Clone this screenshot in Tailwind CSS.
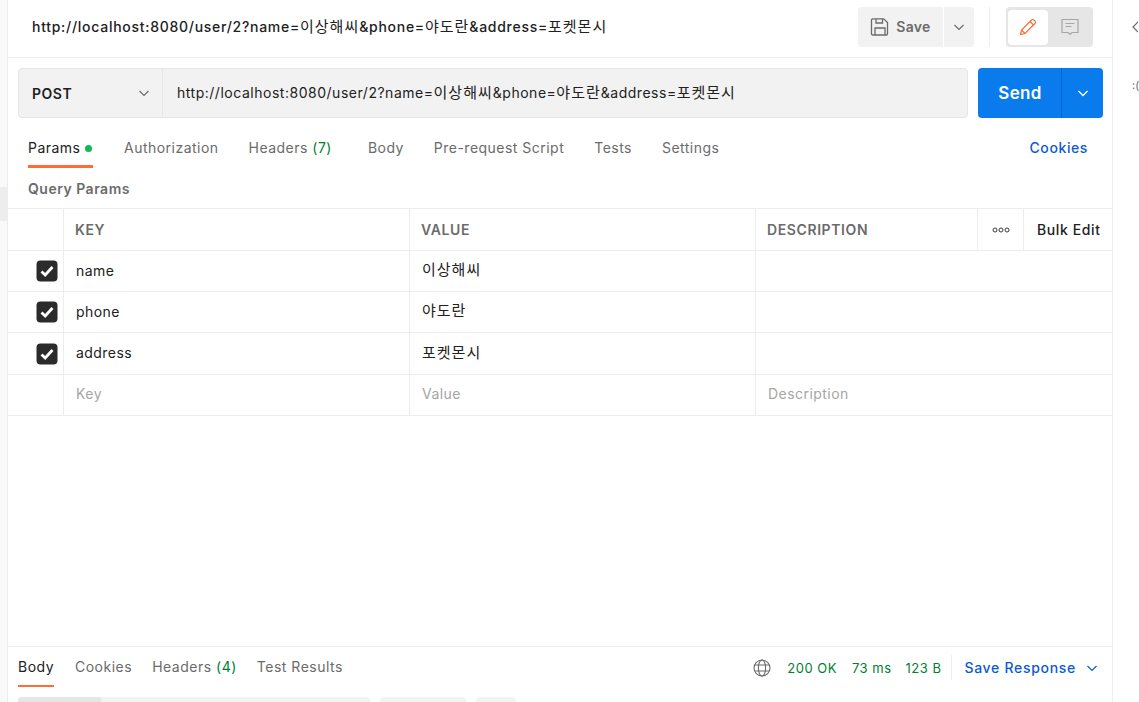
<!DOCTYPE html>
<html lang="en">
<head>
<meta charset="UTF-8">
<title>Postman request</title>
<script src="https://cdn.jsdelivr.net/npm/@tailwindcss/browser@4"></script>
</head>
<body class="bg-white overflow-hidden font-['Inter','Noto_Sans_CJK_KR',sans-serif]">
<div class="flex w-[1139px] h-[702px] overflow-hidden">

  <!-- left strip -->
  <div class="w-[8px] h-full shrink-0 bg-[#f9f9f9] border-r border-[#ededed] pt-[187px]">
    <div class="h-[34px] bg-[#ededed]"></div>
  </div>

  <!-- main -->
  <div class="w-[1104px] h-full shrink-0 flex flex-col">

    <!-- title bar -->
    <div class="h-[58px] shrink-0 border-b border-[#ededed] flex items-center pl-[24px] pr-[19px] pb-[3px]">
      <div class="text-[14px] font-medium text-[#212121] tracking-[0.72px] whitespace-nowrap mt-[1px]">http://localhost:8080/user/2?name=<span class="text-[15px] font-normal tracking-[1px]">이상해씨</span>&amp;phone=<span class="text-[15px] font-normal tracking-[1px]">야도란</span>&amp;address=<span class="text-[15px] font-normal tracking-[1px]">포켓몬시</span></div>
      <div class="ml-auto flex items-center">
        <button class="w-[85px] h-[40px] pb-[1px] bg-[#f2f2f2] rounded-l-[4px] flex items-center justify-center gap-[6px] text-[14px] tracking-[0.3px] font-semibold text-[#6b6b6b]">
          <svg width="20" height="20" viewBox="0 0 20 20" fill="none" stroke="#6b6b6b" stroke-width="1.3"><path d="M1.500 3a1.200 1.200 0 0 1 1.200-1.200h11l3.800 3.800v11.200a1.200 1.200 0 0 1-1.200 1.200H2.700a1.200 1.200 0 0 1-1.200-1.200z"/><path d="M6 2v4h6.500V2M5 18v-7h10v7"/></svg>
          Save
        </button>
        <button class="w-[30px] h-[40px] ml-[1px] bg-[#f2f2f2] rounded-r-[4px] flex items-center justify-center">
          <svg width="12" height="12" viewBox="0 0 12 12" fill="none" stroke="#6b6b6b" stroke-width="1.2"><path d="M1.500 4l4.500 4.500L10.500 4"/></svg>
        </button>
        <div class="w-px h-[40px] bg-[#ededed] ml-[15px] mr-[16px]"></div>
        <div class="w-[87px] h-[40px] bg-[#e6e6e6] rounded-[4px] flex items-center pl-[2px]">
          <div class="w-[40px] h-[35px] bg-white rounded-[4px] flex items-center justify-center">
            <svg width="20" height="20" viewBox="0 0 20 20" fill="none" stroke="#ff6c37" stroke-width="1.2"><path d="M2.500 17.500l1-4.500L13.500 3a1.600 1.600 0 0 1 2.300 0l1.200 1.200a1.600 1.600 0 0 1 0 2.300L7 16.500z"/><path d="M12 4.500l3.500 3.500M3.500 13L7 16.500"/></svg>
          </div>
          <div class="w-[43px] flex items-center justify-center">
            <svg width="20" height="20" viewBox="0 0 20 20" fill="none" stroke="#a6a6a6" stroke-width="1.2"><path d="M2 2.500h16v13h-6l-2 2-2-2H2z"/><path d="M5.500 6.500h9M5.500 9.500h6"/></svg>
          </div>
        </div>
      </div>
    </div>

    <!-- url row -->
    <div class="h-[50px] shrink-0 mt-[10px] ml-[10px] mr-[9px] flex">
      <div class="w-[950px] shrink-0 h-full bg-[#f2f2f2] border border-[#e6e6e6] rounded-[4px] flex items-center">
        <div class="w-[144px] h-full shrink-0 border-r border-[#e6e6e6] flex items-center justify-between pl-[13px] pr-[12px]">
          <span class="text-[14px] font-semibold tracking-[0.5px] text-[#212121]">POST</span>
          <svg width="12" height="12" viewBox="0 0 12 12" fill="none" stroke="#6b6b6b" stroke-width="1.2"><path d="M1.500 4l4.500 4.500L10.500 4"/></svg>
        </div>
        <div class="pl-[14px] text-[14px] text-[#212121] tracking-[0.52px] whitespace-nowrap">http://localhost:8080/user/2?name=<span class="text-[15px] tracking-[1px]">이상해씨</span>&amp;phone=<span class="text-[15px] tracking-[1px]">야도란</span>&amp;address=<span class="text-[15px] tracking-[1px]">포켓몬시</span></div>
      </div>
      <div class="w-[125px] shrink-0 h-full ml-[10px] bg-[#097bed] rounded-[4px] flex">
        <div class="w-[84px] h-full pt-[1px] pl-[1px] border-r border-[#0265d2] flex items-center justify-center text-[17px] tracking-[0.3px] font-semibold text-white">Send</div>
        <div class="flex-1 flex items-center justify-center">
          <svg width="12" height="12" viewBox="0 0 12 12" fill="none" stroke="#ffffff" stroke-width="1.300"><path d="M1.500 4l4.500 4.500L10.500 4"/></svg>
        </div>
      </div>
    </div>

    <!-- request tabs -->
    <div class="h-[50px] shrink-0 flex items-start pt-[20px] pl-[20px] pr-[24px] text-[14px] leading-[20px] tracking-[0.48px] text-[#6b6b6b]">
      <div class="h-[30px] w-[65px] border-b-[3px] border-[#ff6c37] text-[#212121] flex items-start gap-[5px] shrink-0">Params<span class="w-[7px] h-[7px] rounded-full bg-[#0cbb52] mt-[7px]"></span></div>
      <div class="ml-[31px]">Authorization</div>
      <div class="ml-[30px]">Headers <span class="text-[#007f31]">(7)</span></div>
      <div class="ml-[36px]">Body</div>
      <div class="ml-[30px]">Pre-request Script</div>
      <div class="ml-[30px]">Tests</div>
      <div class="ml-[30px]">Settings</div>
      <div class="ml-auto font-medium tracking-[0.6px] text-[#0b5ad4]">Cookies</div>
    </div>

    <div class="h-[40px] shrink-0 pl-[20px] pt-[11px] text-[14px] leading-[20px] tracking-[0.5px] font-semibold text-[#6b6b6b]">Query Params</div>

    <!-- params table -->
    <div class="shrink-0 border-t border-[#ededed] text-[14px] tracking-[0.45px] text-[#212121]">
      <div class="flex h-[42px] border-b border-[#ededed] font-semibold tracking-[0.6px] text-[#6b6b6b]">
        <div class="w-[56px] border-r border-[#ededed]"></div>
        <div class="w-[346px] border-r border-[#ededed] flex items-center pl-[11px]">KEY</div>
        <div class="w-[346px] border-r border-[#ededed] flex items-center pl-[11px]">VALUE</div>
        <div class="w-[222px] border-r border-[#ededed] flex items-center pl-[11px]">DESCRIPTION</div>
        <div class="w-[46px] border-r border-[#ededed] flex items-center justify-center">
          <svg width="18" height="6" viewBox="0 0 18 6" fill="none" stroke="#3b3b3b" stroke-width="1"><circle cx="3" cy="3" r="2"/><circle cx="9" cy="3" r="2"/><circle cx="15" cy="3" r="2"/></svg>
        </div>
        <div class="flex-1 flex items-center pl-[13px] font-medium text-[#212121]">Bulk Edit</div>
      </div>

      <div class="flex h-[41px] border-b border-[#ededed]">
        <div class="w-[56px] border-r border-[#ededed] flex items-center justify-end pr-[5px]">
          <svg width="22" height="22" viewBox="0 0 22 22"><rect x="0.500" y="0.500" width="21" height="21" rx="4" fill="#2b2b2b"/><path d="M5.500 11.500l3.700 3.500 7.300-8" fill="none" stroke="#fff" stroke-width="2.800"/></svg>
        </div>
        <div class="w-[346px] border-r border-[#ededed] flex items-center pl-[12px] pb-[2px]">name</div>
        <div class="w-[346px] border-r border-[#ededed] flex items-center pl-[12px] pb-[1px] text-[15px] tracking-[1px]">이상해씨</div>
        <div class="flex-1"></div>
      </div>
      <div class="flex h-[41px] border-b border-[#ededed]">
        <div class="w-[56px] border-r border-[#ededed] flex items-center justify-end pr-[5px]">
          <svg width="22" height="22" viewBox="0 0 22 22"><rect x="0.500" y="0.500" width="21" height="21" rx="4" fill="#2b2b2b"/><path d="M5.500 11.500l3.700 3.500 7.300-8" fill="none" stroke="#fff" stroke-width="2.800"/></svg>
        </div>
        <div class="w-[346px] border-r border-[#ededed] flex items-center pl-[12px] pb-[2px]">phone</div>
        <div class="w-[346px] border-r border-[#ededed] flex items-center pl-[12px] pb-[1px] text-[15px] tracking-[1px]">야도란</div>
        <div class="flex-1"></div>
      </div>
      <div class="flex h-[42px] border-b border-[#ededed]">
        <div class="w-[56px] border-r border-[#ededed] flex items-center justify-end pr-[5px]">
          <svg width="22" height="22" viewBox="0 0 22 22"><rect x="0.500" y="0.500" width="21" height="21" rx="4" fill="#2b2b2b"/><path d="M5.500 11.500l3.700 3.500 7.300-8" fill="none" stroke="#fff" stroke-width="2.800"/></svg>
        </div>
        <div class="w-[346px] border-r border-[#ededed] flex items-center pl-[12px] pb-[2px]">address</div>
        <div class="w-[346px] border-r border-[#ededed] flex items-center pl-[12px] pb-[1px] text-[15px] tracking-[1px]">포켓몬시</div>
        <div class="flex-1"></div>
      </div>
      <div class="flex h-[41px] border-b border-[#ededed] text-[#a6a6a6]">
        <div class="w-[56px] border-r border-[#ededed]"></div>
        <div class="w-[346px] border-r border-[#ededed] flex items-center pl-[12px] pb-[4px]">Key</div>
        <div class="w-[346px] border-r border-[#ededed] flex items-center pl-[12px] pb-[4px]">Value</div>
        <div class="flex-1 flex items-center pl-[12px] pb-[4px]">Description</div>
      </div>
    </div>

    <div class="flex-1"></div>

    <!-- response bar -->
    <div class="h-[56px] shrink-0 border-t border-[#ededed]">
      <div class="h-[41px] flex items-start pl-[10px] pr-[14px] text-[14px] leading-[20px] tracking-[0.5px] text-[#6b6b6b]">
        <div class="w-[36px] h-[40px] pt-[10px] border-b-[2px] border-[#ff6c37] text-[#212121] shrink-0 whitespace-nowrap">Body</div>
        <div class="ml-[21px] pt-[10px]">Cookies</div>
        <div class="ml-[20px] pt-[10px]">Headers <span class="text-[#007f31]">(4)</span></div>
        <div class="ml-[20px] pt-[10px]">Test Results</div>
        <div class="ml-auto flex items-center h-[40px] pt-[1px]">
          <svg width="18" height="18" viewBox="0 0 18 18" fill="none" stroke="#6b6b6b" stroke-width="1.100"><circle cx="9" cy="9" r="8"/><ellipse cx="9" cy="9" rx="3.600" ry="8"/><path d="M1.800 6h14.400M1.800 12h14.400"/></svg>
          <span class="ml-[16px] text-[13px] text-[#007f31]">200 OK</span>
          <span class="ml-[15px] text-[13px] text-[#007f31]">73 ms</span>
          <span class="ml-[14px] text-[13px] text-[#007f31]">123 B</span>
          <div class="w-px h-[25px] bg-[#ededed] ml-[10px] mr-[12px]"></div>
          <span class="font-medium tracking-[0.7px] text-[#0b5ad4]">Save Response</span>
          <svg class="ml-[10px]" width="12" height="12" viewBox="0 0 12 12" fill="none" stroke="#0b5ad4" stroke-width="1.200"><path d="M1.500 4l4.500 4.500L10.500 4"/></svg>
        </div>
      </div>
      <div class="flex pl-[10px] mt-[9px]">
        <div class="w-[352px] h-[8px] bg-[#f2f2f2] rounded-t-[4px] flex"><div class="w-[83px] bg-[#e6e6e6] rounded-tl-[4px]"></div></div>
        <div class="w-[86px] h-[8px] bg-[#f2f2f2] rounded-t-[4px] ml-[10px]"></div>
        <div class="w-[40px] h-[8px] bg-[#f2f2f2] rounded-t-[4px] ml-[10px]"></div>
      </div>
    </div>
  </div>

  <!-- right strip -->
  <div class="flex-1 h-full border-l border-[#ededed] pl-[19px] pt-[21px]">
    <svg width="6" height="12" viewBox="0 0 6 12" fill="none" stroke="#6b6b6b" stroke-width="1.200"><path d="M6 1L1 6l5 5"/></svg>
    <div class="mt-[45px] text-[11px] leading-[14px] text-[#6b6b6b] whitespace-nowrap">:(</div>
  </div>
</div>
</body>
</html>
